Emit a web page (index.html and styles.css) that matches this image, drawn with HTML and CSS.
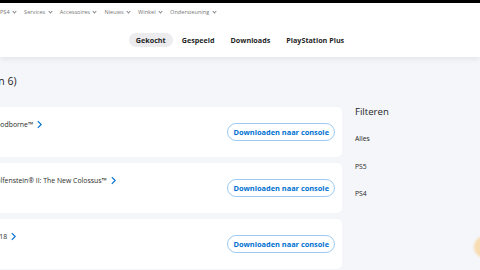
FILE: index.html
```html
<!DOCTYPE html>
<html lang="nl">
<head>
  <meta charset="UTF-8" />
  <meta name="viewport" content="width=device-width, initial-scale=1.0"/>
  <title>Game-bibliotheek</title>
  <link rel="stylesheet" href="styles.css">
</head>
<body>

  <div class="topline"></div>

  <header class="site-header">
    <nav class="globalnav">
      <span>PS4 <i class="caret"></i></span>
      <span>Services <i class="caret"></i></span>
      <span>Accessoires <i class="caret"></i></span>
      <span>Nieuws <i class="caret"></i></span>
      <span>Winkel <i class="caret"></i></span>
      <span>Ondersteuning <i class="caret"></i></span>
    </nav>
    <nav class="subnav">
      <a class="tab active" href="#">Gekocht</a>
      <a class="tab" href="#">Gespeeld</a>
      <a class="tab" href="#">Downloads</a>
      <a class="tab" href="#">PlayStation Plus</a>
    </nav>
  </header>

  <main class="library">
    <section class="games">
      <h2 class="count">Gekocht (3 van 6)</h2>

      <div class="game-card">
        <a class="game-title" href="#">Bloodborne™ <svg class="chev" viewBox="0 0 6 10"><path d="M1 1l4 4-4 4"/></svg></a>
        <button class="dl-btn">Downloaden naar console</button>
      </div>

      <div class="game-card">
        <a class="game-title" href="#">Wolfenstein® II: The New Colossus™ <svg class="chev" viewBox="0 0 6 10"><path d="M1 1l4 4-4 4"/></svg></a>
        <button class="dl-btn">Downloaden naar console</button>
      </div>

      <div class="game-card">
        <a class="game-title" href="#">F1 18 <svg class="chev" viewBox="0 0 6 10"><path d="M1 1l4 4-4 4"/></svg></a>
        <button class="dl-btn">Downloaden naar console</button>
      </div>
    </section>

    <aside class="filters">
      <h3>Filteren</h3>
      <ul>
        <li>Alles</li>
        <li>PS5</li>
        <li>PS4</li>
      </ul>
    </aside>
  </main>

  <div class="help-bubble"></div>

</body>
</html>
```

FILE: styles.css
```css
:root {
  --bg: #f5f6fa;
  --text: #1f1f1f;
  --muted: #6b6b6b;
  --blue: #0070d1;
  --blue-light: #9cc9f2;
}
* { box-sizing: border-box; }
body {
  margin: 0;
  background: var(--bg);
  color: var(--text);
  font-family: "Open Sans", sans-serif;
  overflow: hidden;
}
.topline {
  height: 3px;
  background: #000;
}
.site-header {
  background: #fff;
  box-shadow: 0 2px 6px rgba(0,0,0,0.08);
}
.globalnav {
  display: flex;
  gap: 8px;
  height: 17px;
  align-items: center;
  font-size: 5.6px;
  color: #777;
}
.globalnav .caret {
  display: inline-block;
  width: 3px;
  height: 3px;
  margin: 0 0 1px 2px;
  border-right: 1px solid #888;
  border-bottom: 1px solid #888;
  transform: rotate(45deg);
}
.subnav {
  display: flex;
  justify-content: center;
  align-items: center;
  gap: 2px;
  height: 37px;
  padding-top: 2px;
}
.tab {
  padding: 3px 7px;
  border-radius: 7px;
  font-size: 7.2px;
  font-weight: 700;
  line-height: 8px;
  color: #1f1f1f;
  text-decoration: none;
}
.tab.active {
  background: #ececef;
}
.library {
  display: flex;
  align-items: flex-start;
}
.games {
  flex: 0 0 364px;
  margin-left: -22px;
}
.count {
  margin: 0 0 0 -46px;
  padding: 17px 0 0 0;
  height: 50px;
  font-size: 10.5px;
  font-weight: 400;
}
.game-card {
  display: flex;
  justify-content: space-between;
  align-items: center;
  height: 50px;
  margin-bottom: 6px;
  padding: 0 7px 0 12px;
  background: #fff;
  border-radius: 5px;
}
.game-title {
  align-self: flex-start;
  margin-top: 13px;
  font-size: 6.9px;
  color: #2a2a2a;
  text-decoration: none;
}
.chev {
  width: 5px;
  height: 9px;
  margin-left: 2px;
  vertical-align: -2px;
  fill: none;
  stroke: var(--blue);
  stroke-width: 1.4;
}
.dl-btn {
  height: 18px;
  padding: 0 5px;
  border: 1px solid var(--blue-light);
  border-radius: 9px;
  background: #fff;
  color: var(--blue);
  font-family: "Open Sans", sans-serif;
  font-size: 7.4px;
  font-weight: 700;
}
.filters {
  padding: 48px 0 0 13px;
}
.filters h3 {
  margin: 0 0 16px;
  font-size: 9.6px;
  font-weight: 400;
}
.filters ul {
  list-style: none;
  margin: 0;
  padding: 0;
}
.filters li {
  height: 27.5px;
  font-size: 6.8px;
}
.help-bubble {
  position: fixed;
  right: -16px;
  top: 236px;
  width: 22px;
  height: 22px;
  border-radius: 50%;
  background: #f7dcb2;
  filter: blur(1px);
}
```
